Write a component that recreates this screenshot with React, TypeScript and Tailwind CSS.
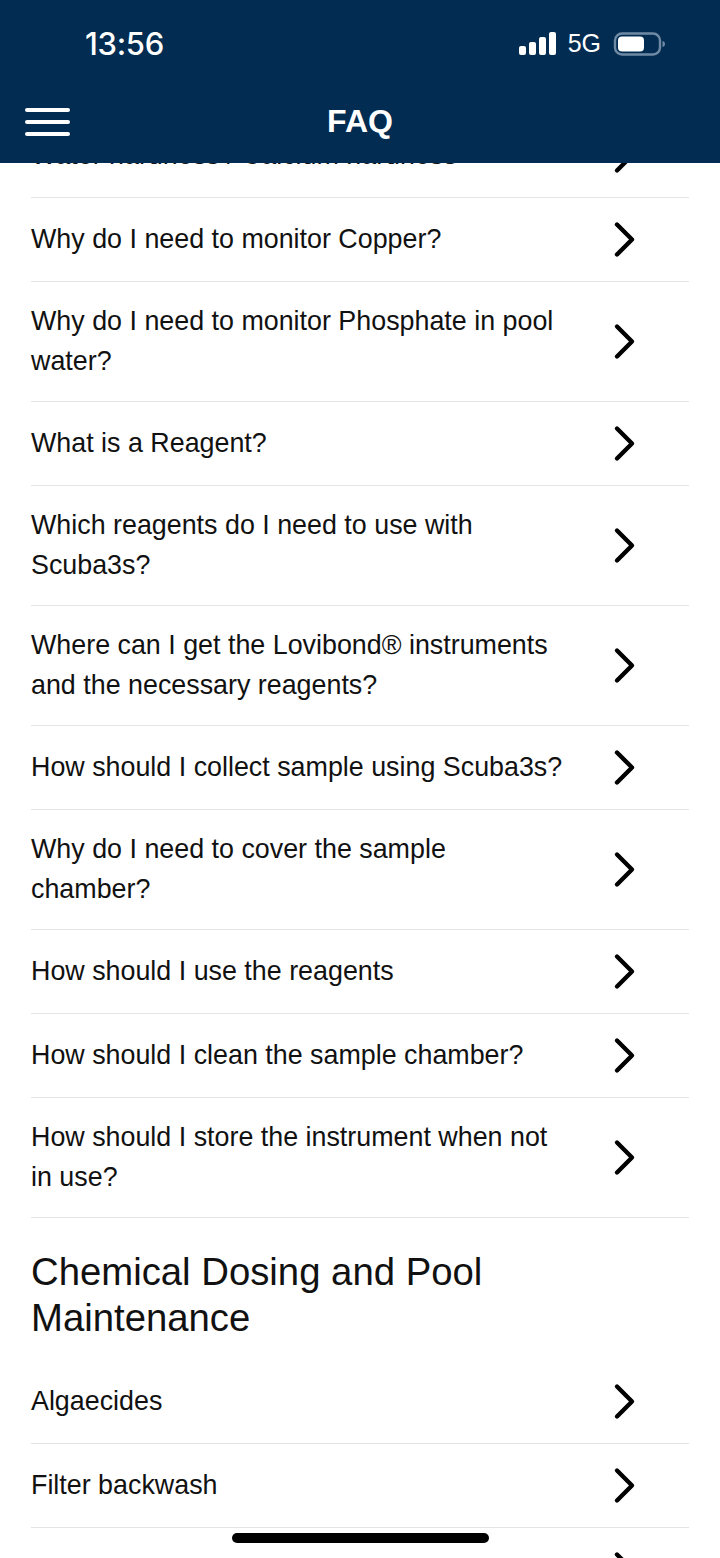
const firstSection = [
  "Water hardness / Calcium hardness",
  "Why do I need to monitor Copper?",
  "Why do I need to monitor Phosphate in pool water?",
  "What is a Reagent?",
  "Which reagents do I need to use with Scuba3s?",
  "Where can I get the Lovibond® instruments and the necessary reagents?",
  "How should I collect sample using Scuba3s?",
  "Why do I need to cover the sample chamber?",
  "How should I use the reagents",
  "How should I clean the sample chamber?",
  "How should I store the instrument when not in use?",
];

const secondSection = ["Algaecides", "Filter backwash", ""];

function Chevron() {
  return (
    <svg viewBox="0 0 24 38" className="h-[38px] w-6 shrink-0" fill="none">
      <path
        d="M5 4.5 L20 19.5 L5 34.5"
        stroke="#000"
        strokeWidth="4.4"
        strokeLinecap="round"
        strokeLinejoin="round"
      />
    </svg>
  );
}

function FaqRow({ label }: { label: string }) {
  return (
    <div className="flex min-h-[84px] items-center justify-between border-b border-[#e4e4e4] pb-5 pr-[53px] pt-[19px]">
      <p className="w-[535px] text-[26.85px] leading-[40px] text-[#111]">{label}</p>
      <Chevron />
    </div>
  );
}

function StatusBar() {
  return (
    <div className="flex h-[87px] items-center justify-between pl-[85px] pr-[54px]">
      <span className="mt-[2px] font-['Inter'] text-[31px] font-medium tracking-[-0.3px]">13:56</span>
      <div className="flex items-center">
        <svg viewBox="0 0 38 24" className="h-6 w-[38px]" fill="#fff">
          <rect x="0" y="14" width="7" height="9" rx="2" />
          <rect x="10" y="10" width="7" height="13" rx="2" />
          <rect x="20" y="5" width="7" height="18" rx="2" />
          <rect x="30" y="0" width="7" height="23" rx="2" />
        </svg>
        <span className="ml-[11px] text-[25px] leading-none">5G</span>
        <svg viewBox="0 0 53 24" className="ml-[12px] h-6 w-[53px]" fill="none">
          <rect x="2" y="1.5" width="45" height="21" rx="7" stroke="#6f8aa5" strokeWidth="2.4" />
          <rect x="5" y="4.5" width="26" height="15" rx="4" fill="#fff" />
          <path d="M49.5 9 C51.5 9.5 52 11 52 12 C52 13 51.5 14.5 49.5 15 Z" fill="#6f8aa5" />
        </svg>
      </div>
    </div>
  );
}

function Header() {
  return (
    <header className="relative z-10 h-[163px] shrink-0 bg-[#022c51] text-white">
      <StatusBar />
      <div className="relative flex h-[68px] items-center justify-center">
        <button className="absolute left-[25px] top-[21px] flex w-[45px] flex-col gap-2">
          <span className="h-1 rounded-sm bg-white" />
          <span className="h-1 rounded-sm bg-white" />
          <span className="h-1 rounded-sm bg-white" />
        </button>
        <h1 className="text-[32px] font-bold">FAQ</h1>
      </div>
    </header>
  );
}

export default function App() {
  return (
    <div className="relative flex h-[1558px] w-[720px] flex-col overflow-hidden bg-white font-['Liberation_Sans',Arial,sans-serif]">
      <Header />
      <main className="-mt-[49px] px-[31px]">
        {firstSection.map((label) => (
          <FaqRow key={label} label={label} />
        ))}
        <h2 className="pb-[19px] pt-[31px] text-[38.3px] leading-[46px] text-[#111]">
          Chemical Dosing and Pool Maintenance
        </h2>
        {secondSection.map((label) => (
          <FaqRow key={label} label={label} />
        ))}
      </main>
      <div className="absolute bottom-[15px] left-[232px] h-[10px] w-[257px] rounded-full bg-black" />
    </div>
  );
}
